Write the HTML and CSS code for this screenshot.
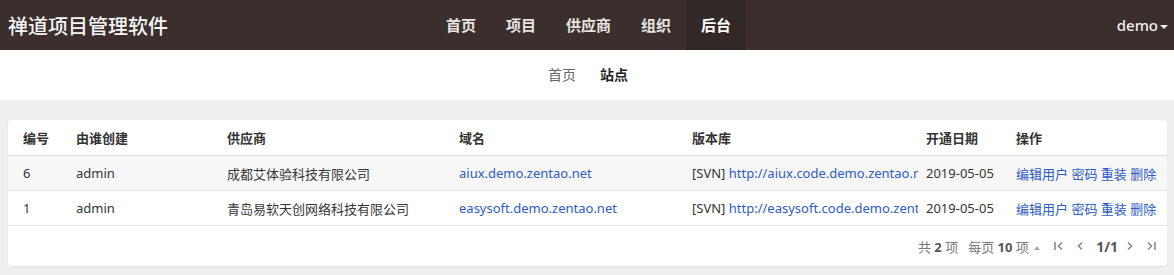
FILE: index.html
```html
<!DOCTYPE html>
<html lang="zh-CN">
<head>
  <meta charset="UTF-8">
  <title>站点 - 禅道项目管理软件</title>
  <link rel="stylesheet" href="styles.css">
</head>
<body>
  <div class="header">
    <div class="brand">禅道项目管理软件</div>
    <ul class="nav">
      <li><a href="#">首页</a></li>
      <li><a href="#">项目</a></li>
      <li><a href="#">供应商</a></li>
      <li><a href="#">组织</a></li>
      <li class="active"><a href="#">后台</a></li>
    </ul>
    <div class="user">demo<span class="caret"></span></div>
  </div>

  <div class="subnav">
    <a href="#">首页</a>
    <a href="#" class="active">站点</a>
  </div>

  <div class="main">
    <div class="panel">
      <table class="table">
        <colgroup>
          <col style="width:60px">
          <col style="width:151px">
          <col style="width:232px">
          <col style="width:233px">
          <col style="width:234px">
          <col style="width:90px">
          <col>
        </colgroup>
        <thead>
          <tr>
            <th>编号</th>
            <th>由谁创建</th>
            <th>供应商</th>
            <th>域名</th>
            <th>版本库</th>
            <th>开通日期</th>
            <th>操作</th>
          </tr>
        </thead>
        <tbody>
          <tr class="hover">
            <td>6</td>
            <td>admin</td>
            <td>成都艾体验科技有限公司</td>
            <td><a href="#">aiux.demo.zentao.net</a></td>
            <td class="clip">[SVN] <a href="#">http://aiux.code.demo.zentao.net</a></td>
            <td>2019-05-05</td>
            <td class="actions"><a href="#">编辑用户</a> <a href="#">密码</a> <a href="#">重装</a> <a href="#">删除</a></td>
          </tr>
          <tr>
            <td>1</td>
            <td>admin</td>
            <td>青岛易软天创网络科技有限公司</td>
            <td><a href="#">easysoft.demo.zentao.net</a></td>
            <td class="clip">[SVN] <a href="#">http://easysoft.code.demo.zentao.net</a></td>
            <td>2019-05-05</td>
            <td class="actions"><a href="#">编辑用户</a> <a href="#">密码</a> <a href="#">重装</a> <a href="#">删除</a></td>
          </tr>
        </tbody>
      </table>

      <div class="footer">
        <span class="pager-text">共 <b>2</b> 项</span>
        <span class="pager-text per-page">每页 <b>10</b> 项 <span class="up"></span></span>
        <span class="pager-btn">
          <svg width="12" height="12" viewBox="0 0 12 12"><path d="M2 2v8M9 2.5L5.5 6 9 9.5" fill="none" stroke="#8a8a8a" stroke-width="1.6"/></svg>
        </span>
        <span class="pager-btn">
          <svg width="12" height="12" viewBox="0 0 12 12"><path d="M8 2.5L4.5 6 8 9.5" fill="none" stroke="#8a8a8a" stroke-width="1.6"/></svg>
        </span>
        <span class="pager-page">1/1</span>
        <span class="pager-btn next">
          <svg width="12" height="12" viewBox="0 0 12 12"><path d="M4 2.5L7.5 6 4 9.5" fill="none" stroke="#8a8a8a" stroke-width="1.6"/></svg>
        </span>
        <span class="pager-btn">
          <svg width="12" height="12" viewBox="0 0 12 12"><path d="M3 2.5L6.5 6 3 9.5M10 2v8" fill="none" stroke="#8a8a8a" stroke-width="1.6"/></svg>
        </span>
      </div>
    </div>
  </div>
</body>
</html>
```

FILE: styles.css
```css
body {
  margin: 0;
  background-color: #efefef;
  color: #333;
  font-family: "Noto Sans", "Noto Sans CJK SC", sans-serif;
  font-size: 13px;
}

a {
  text-decoration: none;
}

.header {
  display: flex;
  align-items: center;
  height: 50px;
  background-color: #3a2f2c;
  color: #fff;
}

.brand {
  width: 431px;
  padding-left: 8px;
  box-sizing: border-box;
  font-size: 20px;
  font-weight: 500;
  color: #f5f5f5;
}

.nav {
  display: flex;
  margin: 0;
  padding: 0;
  list-style: none;
  height: 50px;
}

.nav li a {
  display: block;
  padding: 0 15px;
  line-height: 50px;
  font-size: 15px;
  font-weight: bold;
  color: #e8e4e2;
}

.nav li.active a {
  background-color: #322825;
  color: #fff;
}

.user {
  margin-left: auto;
  padding-right: 6px;
  font-size: 15px;
  font-weight: 500;
  color: #eee;
}

.caret {
  display: inline-block;
  margin-left: 2px;
  vertical-align: middle;
  border-top: 4px solid #eee;
  border-left: 4px solid transparent;
  border-right: 4px solid transparent;
}

.subnav {
  display: flex;
  justify-content: center;
  gap: 24px;
  height: 50px;
  line-height: 50px;
  background-color: #fff;
  padding-left: 2px;
}

.subnav a {
  font-size: 14px;
  color: #666;
}

.subnav a.active {
  font-weight: bold;
  color: #222;
}

.main {
  padding: 20px 7px 8px 8px;
}

.panel {
  background-color: #fff;
  border-radius: 4px;
  box-shadow: 0 1px 2px rgba(0, 0, 0, 0.06);
}

.table {
  width: 100%;
  border-collapse: collapse;
  table-layout: fixed;
}

.table th,
.table td {
  padding: 0 8px;
  text-align: left;
  white-space: nowrap;
  overflow: hidden;
}

.table th:first-child,
.table td:first-child {
  padding-left: 15px;
}

.table th {
  height: 35px;
  font-weight: bold;
  color: #333;
  border-bottom: 1px solid #ddd;
}

.table td {
  height: 34px;
  border-bottom: 1px solid #e4e4e4;
  color: #353535;
}

.table tr.hover td {
  background-color: #f7f7f7;
}

.table td a {
  color: #2d5cc4;
}

.table td.clip {
  text-overflow: clip;
}

.footer {
  display: flex;
  justify-content: flex-end;
  align-items: center;
  height: 40px;
  padding-right: 10px;
  color: #777;
}

.pager-text {
  margin-right: 10px;
}

.pager-text.per-page {
  margin-right: 4px;
}

.pager-text b {
  color: #555;
}

.up {
  display: inline-block;
  margin-left: 2px;
  vertical-align: middle;
  border-bottom: 4px solid #aaa;
  border-left: 3px solid transparent;
  border-right: 3px solid transparent;
}

.pager-btn {
  display: flex;
  align-items: center;
  margin-left: 9px;
}

.pager-btn.next {
  margin-left: 6px;
}

.pager-page {
  margin-left: 10px;
  font-weight: bold;
  color: #555;
  font-size: 14px;
}
```
